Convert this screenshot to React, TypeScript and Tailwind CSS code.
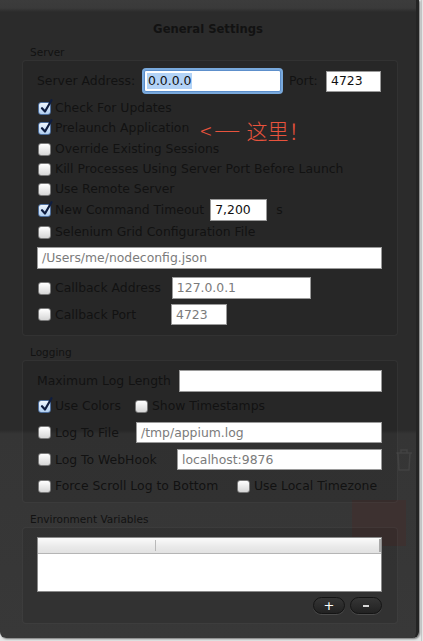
import React from "react";

const TXT = "text-[#121212]";

function Check({ checked = false }: { checked?: boolean }) {
  if (checked) {
    return (
      <span className="relative w-[13px] h-[13px] shrink-0 rounded-[3px] border border-[#4f6f9c] bg-[linear-gradient(#eef5fd,#b2cff0)]">
        <svg
          className="absolute left-[1px] top-[-4px]"
          width="13"
          height="15"
          viewBox="0 0 13 15"
        >
          <path
            d="M2 9.2 L5 12.5 L11.5 1.2"
            fill="none"
            stroke="#0f1d3f"
            strokeWidth="2.2"
            strokeLinecap="round"
            strokeLinejoin="round"
          />
        </svg>
      </span>
    );
  }
  return (
    <span className="w-[13px] h-[13px] shrink-0 rounded-[3px] border border-[#7a7a7a] bg-[linear-gradient(#ffffff,#d6d6d6)]" />
  );
}

function CheckRow({
  checked,
  label,
  className = "",
  children,
}: {
  checked?: boolean;
  label: string;
  className?: string;
  children?: React.ReactNode;
}) {
  return (
    <div className={`flex items-center ${className}`}>
      <div className="ml-[1px] flex items-center gap-[4px]">
        <Check checked={checked} />
        <span className={`text-[12.4px] leading-[16px] whitespace-nowrap ${TXT}`}>{label}</span>
      </div>
      {children}
    </div>
  );
}

function Field({
  value,
  w,
  h = 21,
  gray = false,
}: {
  value: string;
  w: string;
  h?: number;
  gray?: boolean;
}) {
  return (
    <div
      className={`${w} ${h === 22 ? "h-[22px]" : "h-[21px]"} shrink-0 bg-white border border-[#9a9a9a] flex items-center pl-[4px] text-[12.4px] leading-[16px] whitespace-nowrap overflow-hidden ${
        gray ? "text-[#7b7b7b]" : "text-[#111]"
      }`}
    >
      {value}
    </div>
  );
}

function GroupLabel({ text }: { text: string }) {
  return (
    <div className={`h-[24px] pl-[30px] pt-[9px] text-[10.5px] leading-[14px] ${TXT}`}>{text}</div>
  );
}

export default function App() {
  return (
    <div className="relative w-[423px] h-[641px] overflow-hidden bg-[#e4e6e6] font-['DejaVu_Sans',sans-serif]">
      <div className="absolute right-[1px] top-0 h-full w-[1px] bg-[#c9c9c9]" />
      <div className="relative w-[419px] h-[638px] rounded-b-[6px] overflow-hidden bg-[linear-gradient(to_bottom,#3c3c3c_0px,#3a3a3a_8px,#2b2b2b_12px,#2b2b2b_430px,#353535_434px,#383838_100%)] shadow-[1px_1px_2px_rgba(0,0,0,0.5)] border-r-[3px] border-r-[#242424]">
        {/* faint things behind the translucent sheet */}
        <div className="absolute left-[352px] top-[500px] w-[54px] h-[46px] bg-[#3d3130]" />
        <svg className="absolute left-[394px] top-[448px]" width="20" height="24" viewBox="0 0 20 24">
          <path d="M2 5h16M7 5V2h6v3M4 5l1 17h10l1-17" fill="none" stroke="#424242" strokeWidth="1.5" />
        </svg>

        <div className="relative flex flex-col">
          <div className={`h-[37px] pt-[21px] text-center font-bold text-[11.6px] leading-[16px] ${TXT}`}>
            General Settings
          </div>
          <div className={`h-[23px] pl-[30px] pt-[8px] text-[10.5px] leading-[14px] ${TXT}`}>Server</div>

          {/* Server box */}
          <div className="ml-[22px] w-[376px] h-[276px] rounded-[4px] bg-black/[0.09] border border-white/[0.05] pl-[14px] flex flex-col">
            <div className="mt-[9px] h-[22px] flex items-center">
              <span className={`w-[107px] text-[12.4px] ${TXT}`}>Server Address:</span>
              <div className="w-[137px] h-[22px] rounded-[2px] bg-white border border-[#5d8fcb] shadow-[0_0_0_2px_#79a9dc] flex items-center pl-[2px]">
                <span className="bg-[#b3d3f6] px-[1px] text-[12.4px] leading-[16px] text-[#111]">0.0.0.0</span>
              </div>
              <span className={`ml-[8px] w-[37px] text-[12.4px] ${TXT}`}>Port:</span>
              <Field value="4723" w="w-[55px]" />
            </div>

            <CheckRow checked label="Check For Updates" className="mt-[6px] h-[20px]" />
            <CheckRow checked label="Prelaunch Application" className="h-[20px]">
              <span className="ml-[11px] mt-[3px] text-[21px] leading-[18px] font-light text-[#e8533d] whitespace-nowrap font-['Noto_Sans_CJK_SC',sans-serif]">
                &lt;
                <span className="inline-block ml-[2px] mr-[7px] w-[26px] overflow-visible">
                  <span className="inline-block origin-left scale-x-[1.25]">一</span>
                </span>
                这里！
              </span>
            </CheckRow>
            <CheckRow label="Override Existing Sessions" className="mt-[1px] h-[20px]" />
            <CheckRow label="Kill Processes Using Server Port Before Launch" className="h-[20px]" />
            <CheckRow label="Use Remote Server" className="h-[20px]" />
            <CheckRow checked label="New Command Timeout" className="h-[22px]">
              <div className="ml-[6px]">
                <Field value="7,200" w="w-[57px]" h={22} />
              </div>
              <span className={`ml-[9px] text-[12.4px] ${TXT}`}>s</span>
            </CheckRow>
            <CheckRow label="Selenium Grid Configuration File" className="mt-[1px] h-[20px]" />
            <div className="mt-[5px]">
              <Field value="/Users/me/nodeconfig.json" w="w-[345px]" h={22} gray />
            </div>
            <CheckRow label="Callback Address" className="mt-[8px] h-[22px]">
              <div className="ml-[11px]">
                <Field value="127.0.0.1" w="w-[139px]" h={22} gray />
              </div>
            </CheckRow>
            <div className="mt-[5px] h-[21px] flex items-center">
              <div className="w-[134px]">
                <CheckRow label="Callback Port" />
              </div>
              <Field value="4723" w="w-[56px]" gray />
            </div>
          </div>

          <GroupLabel text="Logging" />
          {/* Logging box */}
          <div className="ml-[22px] w-[376px] h-[143px] rounded-[4px] bg-black/[0.09] border border-white/[0.05] pl-[14px] flex flex-col">
            <div className="mt-[9px] h-[22px] flex items-center">
              <span className={`w-[142px] text-[12.4px] whitespace-nowrap ${TXT}`}>Maximum Log Length</span>
              <Field value="" w="w-[203px]" h={22} />
            </div>
            <div className="mt-[4px] h-[20px] flex items-center">
              <div className="w-[97px]">
                <CheckRow checked label="Use Colors" />
              </div>
              <CheckRow label="Show Timestamps" />
            </div>
            <div className="mt-[6px] h-[21px] flex items-center">
              <div className="w-[99px]">
                <CheckRow label="Log To File" />
              </div>
              <Field value="/tmp/appium.log" w="w-[246px]" gray />
            </div>
            <div className="mt-[6px] h-[21px] flex items-center">
              <div className="w-[140px]">
                <CheckRow label="Log To WebHook" />
              </div>
              <Field value="localhost:9876" w="w-[205px]" gray />
            </div>
            <div className="mt-[6px] h-[20px] flex items-center">
              <div className="w-[199px]">
                <CheckRow label="Force Scroll Log to Bottom" />
              </div>
              <CheckRow label="Use Local Timezone" />
            </div>
          </div>

          <GroupLabel text="Environment Variables" />
          {/* Env box */}
          <div className="ml-[22px] w-[376px] h-[97px] rounded-[4px] bg-black/[0.09] border border-white/[0.05] pl-[14px] flex flex-col">
            <div className="mt-[9px] w-[345px] h-[55px] bg-white border border-[#8a8a8a] flex flex-col">
              <div className="h-[16px] flex bg-[linear-gradient(#fbfbfb,#e9e9e9_60%,#e2e2e2)] border-b border-[#b5b5b5]">
                <div className="w-[118px] border-r border-[#b9b9b9] my-[2px]" />
                <div className="flex-1" />
                <div className="w-[2px] my-[1px] bg-[#a8a8a8]" />
              </div>
            </div>
            <div className="mt-[5px] h-[17px] flex justify-end gap-[5px] pr-[15px]">
              <div className="w-[32px] h-[17px] rounded-full border border-[#141414] bg-[linear-gradient(#353535,#222)] shadow-[0_1px_0_rgba(255,255,255,0.12)] flex items-center justify-center text-white text-[13px] leading-[13px]">
                +
              </div>
              <div className="w-[32px] h-[17px] rounded-full border border-[#141414] bg-[linear-gradient(#353535,#222)] shadow-[0_1px_0_rgba(255,255,255,0.12)] flex items-center justify-center">
                <span className="w-[6px] h-[2px] bg-[#d8d8d8]" />
              </div>
            </div>
          </div>
        </div>
      </div>
    </div>
  );
}
